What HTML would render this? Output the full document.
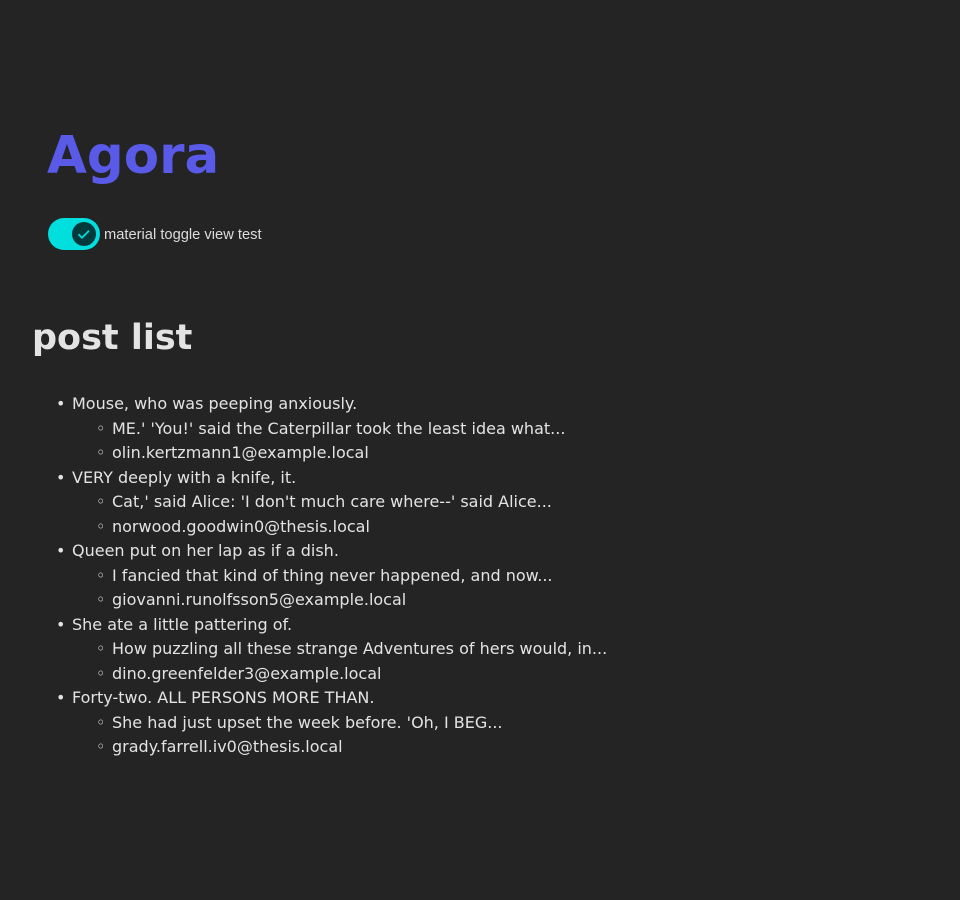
<!DOCTYPE html>
<html><head><style>
html,body{margin:0;background:#242424;}
body{width:960px;height:900px;position:relative;font-family:"DejaVu Sans",sans-serif;color:#e3e3e3;}
h1{position:absolute;left:47px;top:120px;margin:0;font-size:51.5px;font-weight:bold;color:#5a5ae8;line-height:72px;}
.tog{position:absolute;left:48px;top:218px;width:52px;height:32px;border-radius:16px;background:#00dede;}
.thumb{position:absolute;left:24px;top:4px;width:24px;height:24px;border-radius:12px;background:#013a3c;}
.lbl{position:absolute;left:104px;top:227px;font-family:"Liberation Sans",sans-serif;font-size:14.7px;color:#ddd;}
h2{position:absolute;left:32px;top:314px;margin:0;font-size:35px;font-weight:bold;color:#e3e3e3;line-height:48px;}
ul{margin:0;padding:0;list-style:none;}
.list{position:absolute;left:72px;top:392px;font-size:16px;line-height:24.5px;}
.list li{position:relative;}
.list>li::before{content:"•";position:absolute;left:-16px;}
.list ul{padding-left:40px;}
.list ul li::before{content:"◦";position:absolute;left:-16px;}
</style></head><body>
<h1>Agora</h1>
<div class="tog"><div class="thumb"><svg width="24" height="24" viewBox="0 0 24 24"><path d="M6.5 12.2l3.5 3.5 7-7" stroke="#00dede" stroke-width="1.8" fill="none"/></svg></div></div>
<div class="lbl">material toggle view test</div>
<h2>post list</h2>
<ul class="list">
<li>Mouse, who was peeping anxiously.<ul><li>ME.' 'You!' said the Caterpillar took the least idea what...</li><li>olin.kertzmann1@example.local</li></ul></li>
<li>VERY deeply with a knife, it.<ul><li>Cat,' said Alice: 'I don't much care where--' said Alice...</li><li>norwood.goodwin0@thesis.local</li></ul></li>
<li>Queen put on her lap as if a dish.<ul><li>I fancied that kind of thing never happened, and now...</li><li>giovanni.runolfsson5@example.local</li></ul></li>
<li>She ate a little pattering of.<ul><li>How puzzling all these strange Adventures of hers would, in...</li><li>dino.greenfelder3@example.local</li></ul></li>
<li>Forty-two. ALL PERSONS MORE THAN.<ul><li>She had just upset the week before. 'Oh, I BEG...</li><li>grady.farrell.iv0@thesis.local</li></ul></li>
</ul>
</body></html>
